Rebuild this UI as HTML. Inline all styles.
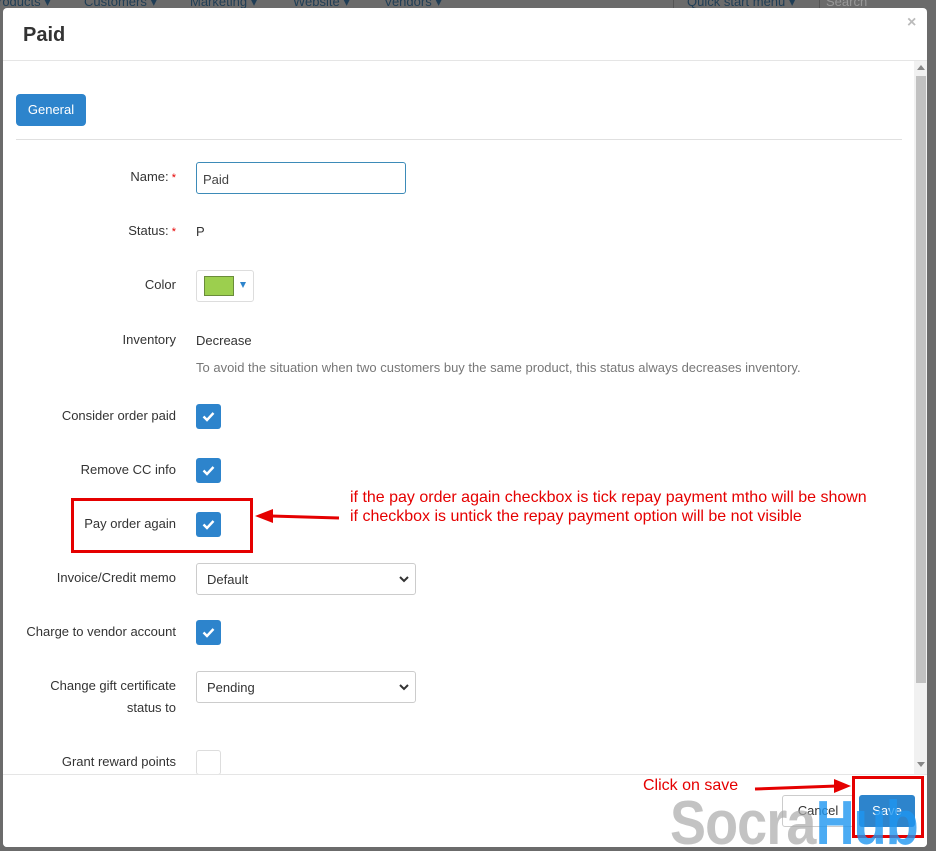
<!DOCTYPE html>
<html><head><meta charset="utf-8"><style>
*{box-sizing:border-box;margin:0;padding:0}
body{width:936px;height:851px;background:#6b6b6b;font-family:"Liberation Sans",sans-serif;position:relative;overflow:hidden;color:#333}
.nav{position:absolute;top:-6px;left:0;font-size:13px;color:#1f3d55;white-space:nowrap}
.nav span{position:absolute}
.modal{position:absolute;left:3px;top:8px;width:924px;height:839px;background:#fff;border-radius:4px;overflow:hidden}
.a{position:absolute}
.lbl{position:absolute;right:751px;font-size:13px;color:#333;text-align:right;line-height:22px}
.cb{position:absolute;left:193px;width:25px;height:25px;background:#2d84cc;border-radius:3px}
.cb svg{position:absolute;left:6px;top:7px}
.sel{position:absolute;left:193px;width:220px;height:32px;border:1px solid #ccc;border-radius:3px;font-size:13px;padding:8px 10px;color:#333}
.sel svg{position:absolute;right:6px;top:12px}
.red{color:#e50000}
</style></head><body>
<div class="nav">
<span style="left:-2px;top:0">roducts ▾</span>
<span style="left:84px">Customers ▾</span>
<span style="left:190px">Marketing ▾</span>
<span style="left:293px">Website ▾</span>
<span style="left:384px">Vendors ▾</span>
<span style="left:687px">Quick start menu ▾</span>
<span style="left:826px;color:#999">Search</span>
</div>
<div class="a" style="left:673px;top:0;width:1px;height:8px;background:#555"></div>
<div class="a" style="left:819px;top:0;width:1px;height:8px;background:#555"></div>
<div class="modal">
<div class="a" style="left:20px;top:16px;font-size:20px;font-weight:bold;color:#333">Paid</div>
<div class="a" style="left:904px;top:6px;font-size:16px;font-weight:bold;color:#bbb">×</div>
<div class="a" style="left:0;top:52px;width:924px;height:1px;background:#e5e5e5"></div>
<div class="a" style="left:911px;top:53px;width:13px;height:713px;background:#f1f1f1"></div>
<div class="a" style="left:913px;top:68px;width:10px;height:607px;background:#c1c1c1"></div>
<div class="a" style="left:914px;top:57px;width:0;height:0;border:4px solid transparent;border-bottom:5px solid #888;border-top:0"></div>
<div class="a" style="left:914px;top:754px;width:0;height:0;border:4px solid transparent;border-top:5px solid #888;border-bottom:0"></div>
<div class="a" style="left:13px;top:86px;width:70px;height:32px;background:#2d84cc;border-radius:4px;color:#fff;font-size:13px;text-align:center;line-height:32px">General</div>
<div class="a" style="left:13px;top:131px;width:886px;height:1px;background:#e0e0e0"></div>

<div class="lbl" style="top:158px">Name:<span class="red" style="font-size:11px"> *</span></div>
<div class="a" style="left:193px;top:154px;width:210px;height:32px;border:1px solid #3d8bb8;border-radius:3px;font-size:13px;padding:9px 6px;color:#444">Paid</div>
<div class="lbl" style="top:212px">Status:<span class="red" style="font-size:11px"> *</span></div>
<div class="a" style="left:193px;top:216px;font-size:13px">P</div>
<div class="lbl" style="top:266px">Color</div>
<div class="a" style="left:193px;top:262px;width:58px;height:32px;border:1px solid #ddd;border-radius:3px"></div>
<div class="a" style="left:201px;top:268px;width:30px;height:20px;background:#9ccf4e;border:1px solid #6a8c3a"></div>
<div class="a" style="left:237px;top:274px;width:0;height:0;border:3.5px solid transparent;border-top:6px solid #2d84cc;border-bottom:0"></div>
<div class="lbl" style="top:321px">Inventory</div>
<div class="a" style="left:193px;top:325px;font-size:13px">Decrease</div>
<div class="a" style="left:193px;top:352px;font-size:13px;color:#777">To avoid the situation when two customers buy the same product, this status always decreases inventory.</div>

<div class="lbl" style="top:397px">Consider order paid</div>
<div class="cb" style="top:396px"><svg width="13" height="11" viewBox="0 0 13 11"><path d="M1.5 5.5l3.5 3.5 6.5-7" stroke="#fff" stroke-width="2.4" fill="none"/></svg></div>
<div class="lbl" style="top:451px">Remove CC info</div>
<div class="cb" style="top:450px"><svg width="13" height="11" viewBox="0 0 13 11"><path d="M1.5 5.5l3.5 3.5 6.5-7" stroke="#fff" stroke-width="2.4" fill="none"/></svg></div>
<div class="lbl" style="top:505px">Pay order again</div>
<div class="cb" style="top:504px"><svg width="13" height="11" viewBox="0 0 13 11"><path d="M1.5 5.5l3.5 3.5 6.5-7" stroke="#fff" stroke-width="2.4" fill="none"/></svg></div>
<div class="lbl" style="top:559px">Invoice/Credit memo</div>
<div class="sel" style="top:555px">Default<svg width="10" height="7" viewBox="0 0 10 7"><path d="M1 1l4 4 4-4" stroke="#333" stroke-width="2" fill="none"/></svg></div>
<div class="lbl" style="top:613px">Charge to vendor account</div>
<div class="cb" style="top:612px"><svg width="13" height="11" viewBox="0 0 13 11"><path d="M1.5 5.5l3.5 3.5 6.5-7" stroke="#fff" stroke-width="2.4" fill="none"/></svg></div>
<div class="lbl" style="top:667px">Change gift certificate<br>status to</div>
<div class="sel" style="top:663px">Pending<svg width="10" height="7" viewBox="0 0 10 7"><path d="M1 1l4 4 4-4" stroke="#333" stroke-width="2" fill="none"/></svg></div>
<div class="lbl" style="top:743px">Grant reward points</div>
<div class="a" style="left:193px;top:742px;width:25px;height:25px;border:1px solid #ddd;border-radius:3px"></div>

<div class="a" style="left:0;top:766px;width:924px;height:73px;background:#fff;border-top:1px solid #e5e5e5"></div>
<div class="a" style="left:779px;top:787px;width:72px;height:32px;border:1px solid #ccc;border-radius:3px;font-size:13px;text-align:center;line-height:30px;color:#333">Cancel</div>
<div class="a" style="left:856px;top:787px;width:56px;height:32px;background:#2d84cc;border-radius:3px;font-size:13px;text-align:center;line-height:32px;color:#fff">Save</div>

<div class="a" style="left:68px;top:490px;width:182px;height:55px;border:3px solid #e50000"></div>
<div class="a" style="left:849px;top:768px;width:72px;height:62px;border:3px solid #e50000"></div>
<div class="a red" style="left:347px;top:480px;font-size:16px;line-height:19px;white-space:nowrap">if the pay order again checkbox is tick repay payment mtho will be shown<br>if checkbox is untick the repay payment option will be not visible</div>
<div class="a red" style="left:640px;top:769px;font-size:16px">Click on save</div>
<svg class="a" style="left:0;top:0" width="924" height="839">
<path d="M336 510L268 508" stroke="#e50000" stroke-width="3"/>
<path d="M252 508l18-7v14z" fill="#e50000"/>
<path d="M752 781L834 778" stroke="#e50000" stroke-width="3"/>
<path d="M848 778l-17-7v14z" fill="#e50000"/>
</svg>
<div class="a" style="left:667px;top:785px;font-size:62px;font-weight:bold;white-space:nowrap;letter-spacing:-1px;line-height:1;transform:scaleX(0.87);transform-origin:0 0"><span style="color:rgba(170,170,170,0.7)">Socra</span><span style="color:rgba(30,150,240,0.8)">Hub</span></div>
</div>
</body></html>
